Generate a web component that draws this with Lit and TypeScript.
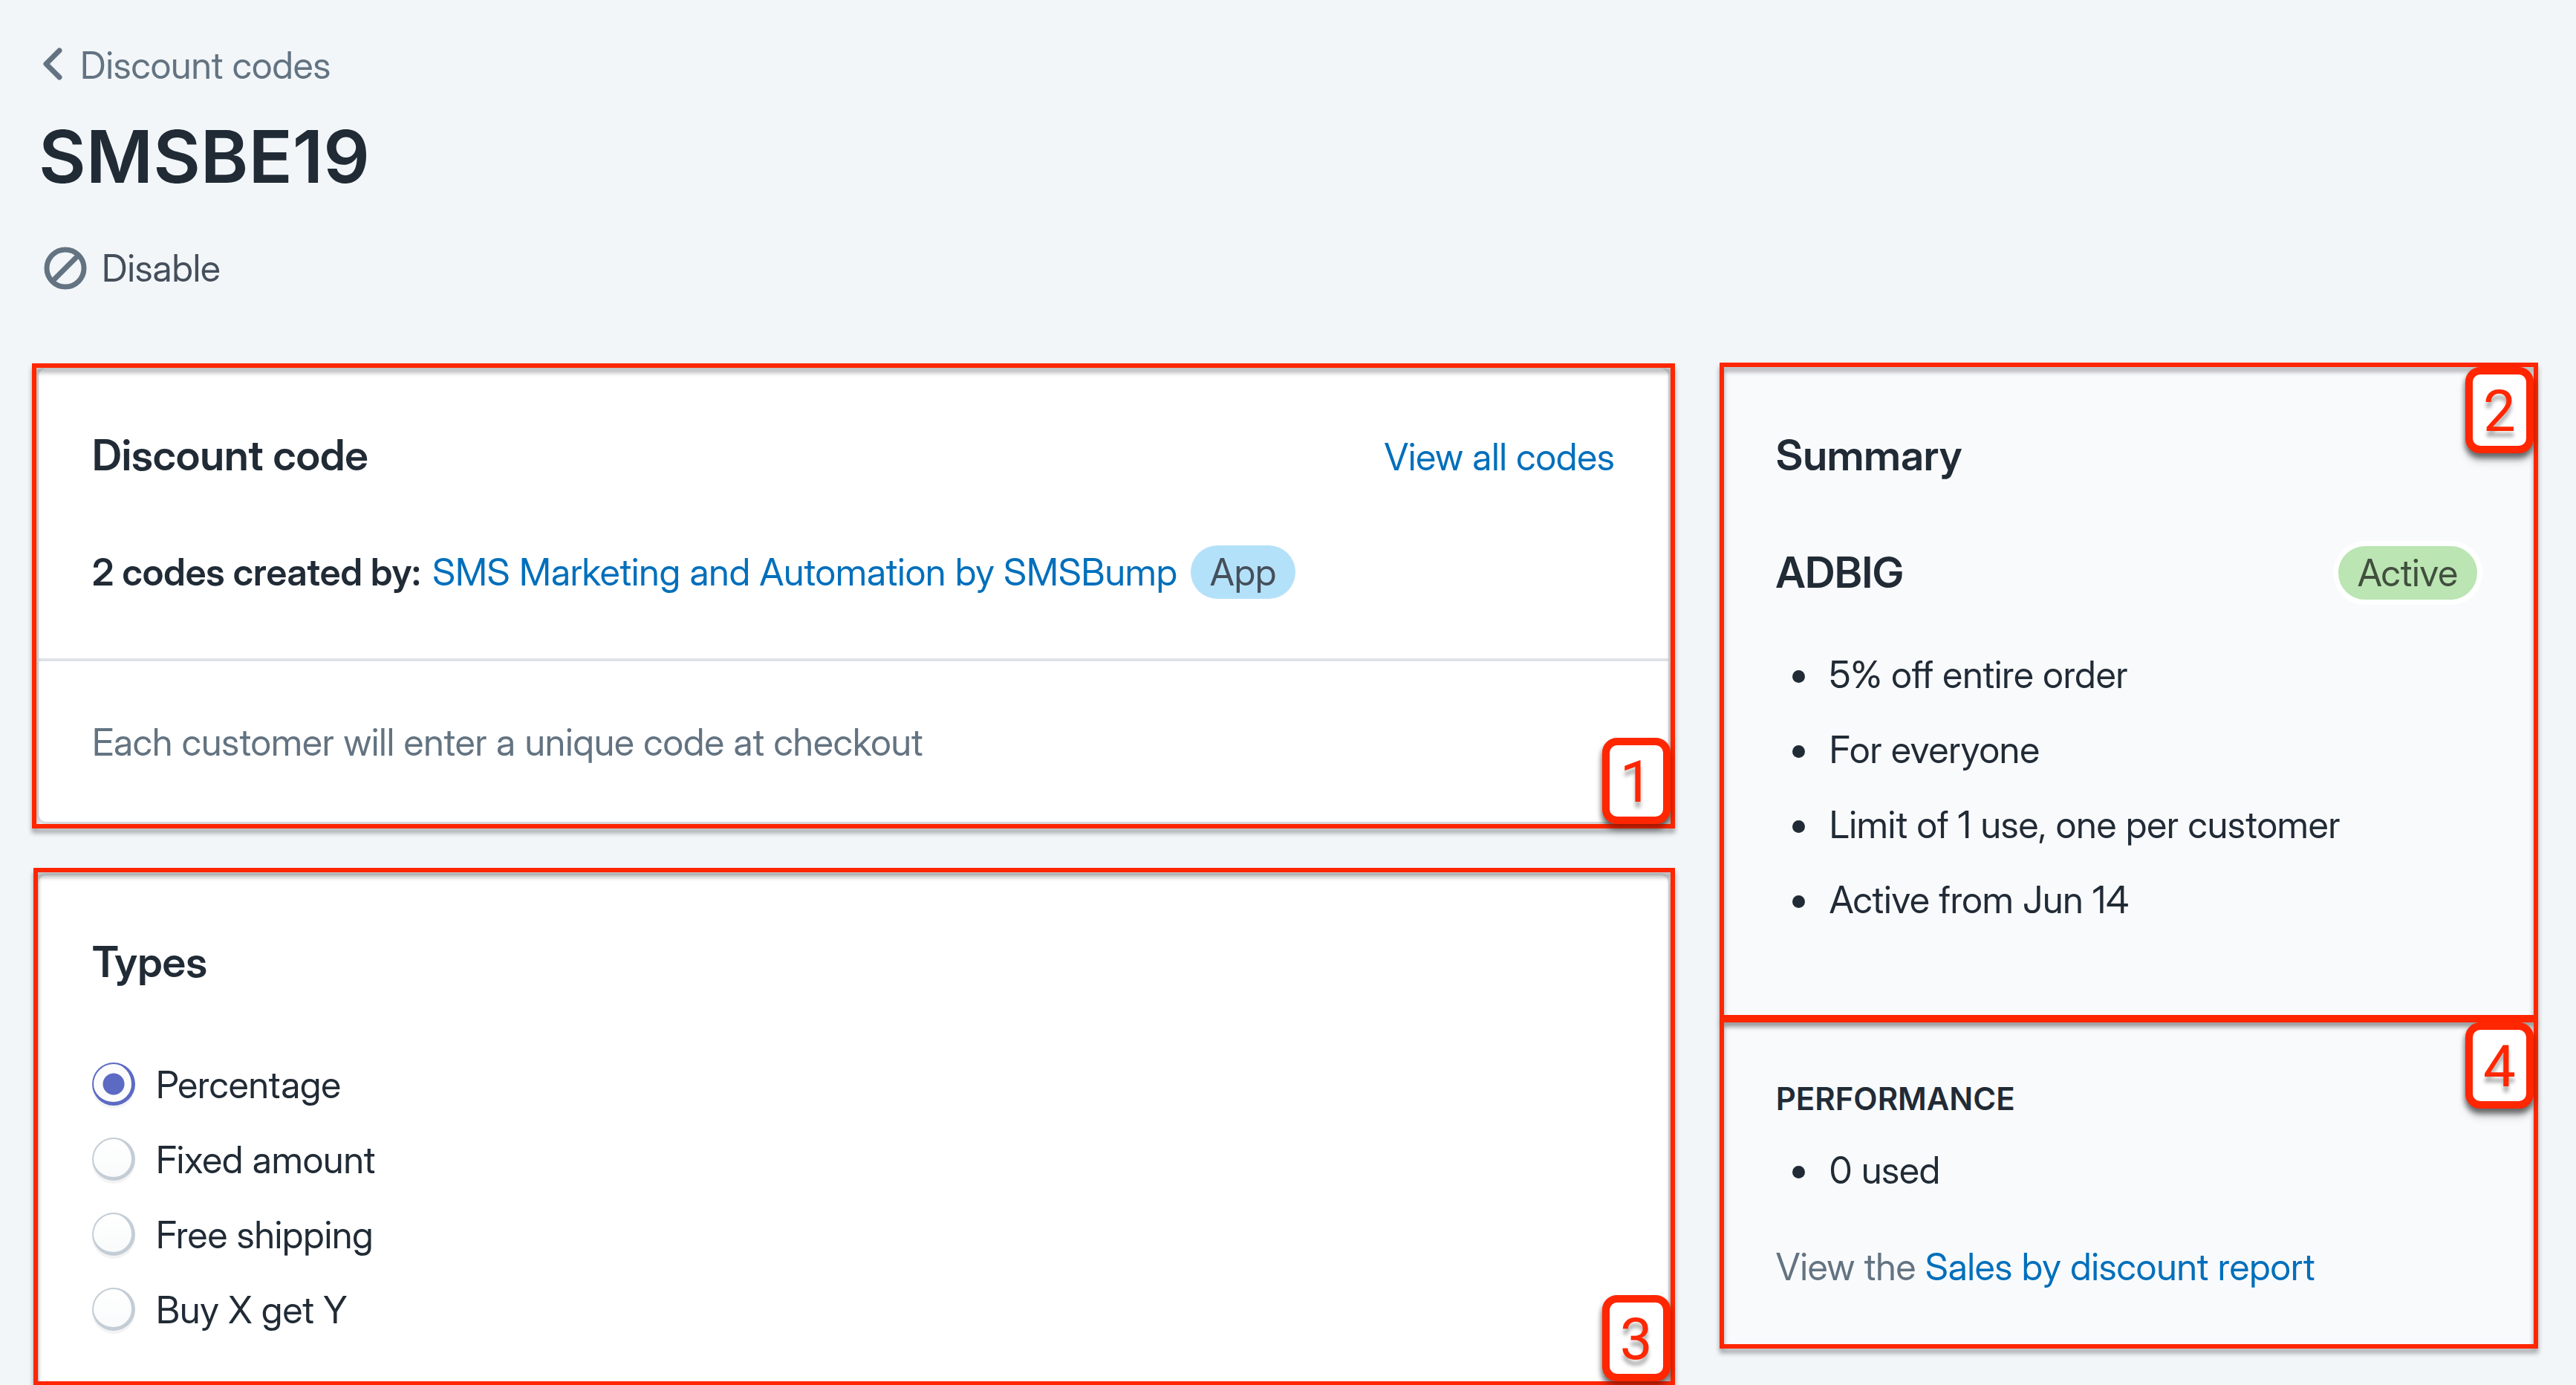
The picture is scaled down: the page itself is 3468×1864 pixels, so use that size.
import { LitElement, html, css, svg } from "lit";
import { customElement, property, state } from "lit/decorators.js";

const chevronIcon = svg`<path d="M22 4 L4 22 L22 40" fill="none" stroke="#637381" stroke-width="7" stroke-linecap="round" stroke-linejoin="round"/>`;
const disableIcon = svg`<g fill="none" stroke="#637381" stroke-width="7"><circle cx="29" cy="29" r="25"/><path d="M12 46 L46 12"/></g>`;

/** Red outline with a numbered badge, laid over the block that contains it. */
@customElement("callout-frame")
export class CalloutFrame extends LitElement {
  @property({ type: Number }) number = 0;
  @property({ reflect: true }) corner: "top" | "bottom" = "bottom";

  static styles = css`
    :host {
      position: absolute;
      display: flex;
      justify-content: flex-end;
      align-items: flex-end;
      box-sizing: border-box;
      border: 6px solid #ff2600;
      filter: drop-shadow(0 6px 3px rgba(0, 0, 0, 0.35));
      pointer-events: none;
      z-index: 1;
    }
    :host([corner="top"]) {
      align-items: flex-start;
    }
    .badge {
      box-sizing: border-box;
      width: 92px;
      height: 116px;
      border: 10px solid #ff2600;
      border-radius: 20px;
      background: #fff;
      box-shadow: 0 6px 8px rgba(0, 0, 0, 0.4);
      color: #ff2600;
      font: 400 78px/100px Roboto, "Liberation Sans", sans-serif;
      text-align: center;
      text-shadow: 0 8px 5px rgba(0, 0, 0, 0.3);
    }
  `;

  render() {
    return html`<span class="badge">${this.number}</span>`;
  }
}

@customElement("app-root")
export class AppRoot extends LitElement {
  @state() private selected = "Percentage";

  private types = ["Percentage", "Fixed amount", "Free shipping", "Buy X get Y"];
  private details = [
    "5% off entire order",
    "For everyone",
    "Limit of 1 use, one per customer",
    "Active from Jun 14",
  ];

  static styles = css`
    :host {
      display: block;
      box-sizing: border-box;
      min-height: 100vh;
      padding: 52px 54px 0 52px;
      overflow: hidden;
      background: #f2f6f9;
      color: #212b36;
      font: 400 50px/72px "Inter Display", Inter, sans-serif;
    }
    h1, h2, h3, p, ul, fieldset {
      margin: 0;
      padding: 0;
      border: 0;
    }
    a {
      color: #006fbb;
      text-decoration: none;
    }
    svg {
      display: block;
      flex: none;
    }
    .crumb {
      display: inline-flex;
      align-items: center;
      gap: 22px;
      padding-left: 6px;
      color: #637381;
      vertical-align: top;
    }
    .crumb svg {
      margin-bottom: 4px;
    }
    h1 {
      margin-top: 37px;
      font-family: Inter, sans-serif;
      font-size: 98px;
      font-weight: 600;
      line-height: 100px;
    }
    .disable {
      display: flex;
      align-items: center;
      gap: 20px;
      margin: 64px 0 0;
      padding: 0 0 0 7px;
      border: 0;
      background: none;
      color: #454f5b;
      font: inherit;
    }
    .layout {
      display: grid;
      grid-template-columns: 667fr 333fr;
      align-items: start;
      gap: 73px;
      margin-top: 99px;
    }
    .main {
      display: grid;
      gap: 72px;
    }
    .card {
      position: relative;
      border-radius: 10px;
      background: #fff;
      box-shadow: 0 0 0 3px rgba(63, 63, 68, 0.06), 0 3px 9px rgba(63, 63, 68, 0.15);
    }
    .side {
      background: #f9fafc;
      border-radius: 0;
      box-shadow: none;
    }
    .section {
      padding: 73px 72px 71px;
    }
    .side .section {
      position: relative;
    }
    .section + .section {
      border-top: 4px solid #dfe3e8;
    }
    h2 {
      font-size: 57px;
      font-weight: 600;
      line-height: 88px;
    }
    .row {
      display: flex;
      align-items: baseline;
      justify-content: space-between;
    }
    .creator {
      display: flex;
      align-items: center;
      margin-top: 77px;
      padding-bottom: 9px;
    }
    .creator strong {
      font-weight: 600;
    }
    .creator a {
      margin: 0 18px 0 16px;
    }
    .pill {
      padding: 0 26px;
      border-radius: 36px;
      background: #b4e1fa;
      color: #454f5b;
    }
    .pill.active {
      margin: -7px;
      border: 7px solid #fff;
      border-radius: 43px;
      background: #bbe5b3;
      color: #414f3e;
    }
    .muted {
      color: #637381;
    }
    fieldset {
      display: grid;
      gap: 29px;
      margin-top: 85px;
    }
    .types {
      padding-bottom: 65px;
    }
    .choice {
      display: flex;
      align-items: center;
      gap: 28px;
    }
    .choice input {
      appearance: none;
      box-sizing: border-box;
      width: 58px;
      height: 58px;
      margin: 0 0 2px;
      border: solid #c4cdd5;
      border-width: 2px 5px 5px 2px;
      border-radius: 50%;
      background: linear-gradient(#fff, #f9fafb);
      box-shadow: 0 4px 0 rgba(22, 29, 37, 0.05);
    }
    .choice input:checked {
      border-color: #5c6ac4;
      background: radial-gradient(circle at 27px 27px, #5c6ac4 14px, #fcfcfd 15px);
    }
    .code {
      display: flex;
      align-items: center;
      justify-content: space-between;
      margin-top: 70px;
      padding-right: 7px;
    }
    ul {
      margin-top: 57px;
      padding-left: 72px;
      list-style: none;
    }
    li + li {
      margin-top: 29px;
    }
    li::before {
      content: "";
      display: inline-block;
      width: 17px;
      height: 17px;
      margin: 0 33px 0 -50px;
      border-radius: 50%;
      background: #212b36;
      vertical-align: 7px;
    }
    .summary {
      padding-bottom: 123px;
    }
    h3 {
      padding-top: 4px;
      font-family: Inter, sans-serif;
      font-size: 42px;
      font-weight: 600;
      line-height: 56px;
      text-transform: uppercase;
    }
    h3 + ul {
      margin-top: 32px;
    }
    .report {
      margin-top: 58px;
    }
    .frame-code {
      inset: -7px -9px -9px -9px;
    }
    .frame-types {
      inset: -10px -9px -1px -7px;
    }
    .frame-summary {
      inset: -8px -3px -2px -4px;
    }
    .frame-performance {
      inset: -4px -3px -3px -4px;
    }
  `;

  render() {
    return html`
      <header>
        <a class="crumb" href="#codes">
          <svg width="28" height="44" viewBox="0 0 28 44" aria-hidden="true">${chevronIcon}</svg>
          Discount codes
        </a>
        <h1>SMSBE19</h1>
        <button class="disable" type="button">
          <svg width="58" height="58" viewBox="0 0 58 58" aria-hidden="true">${disableIcon}</svg>
          Disable
        </button>
      </header>
      <main class="layout">
        <div class="main">
          <section class="card">
            <div class="section">
              <div class="row">
                <h2>Discount code</h2>
                <a href="#all">View all codes</a>
              </div>
              <div class="creator">
                <strong>2 codes created by:</strong>
                <a href="#app">SMS Marketing and Automation by SMSBump</a>
                <span class="pill">App</span>
              </div>
            </div>
            <div class="section">
              <p class="muted">Each customer will enter a unique code at checkout</p>
            </div>
            <callout-frame class="frame-code" number="1" corner="bottom"></callout-frame>
          </section>
          <section class="card">
            <div class="section types">
              <h2 id="types">Types</h2>
              <fieldset aria-labelledby="types">
                ${this.types.map(
                  (type) => html`
                    <label class="choice">
                      <input
                        type="radio"
                        name="type"
                        .checked=${this.selected === type}
                        @change=${() => (this.selected = type)}
                      />
                      ${type}
                    </label>
                  `,
                )}
              </fieldset>
            </div>
            <callout-frame class="frame-types" number="3" corner="bottom"></callout-frame>
          </section>
        </div>
        <aside class="card side">
          <div class="section summary">
            <h2>Summary</h2>
            <div class="code">
              <h2>ADBIG</h2>
              <span class="pill active">Active</span>
            </div>
            <ul>
              ${this.details.map((detail) => html`<li>${detail}</li>`)}
            </ul>
            <callout-frame class="frame-summary" number="2" corner="top"></callout-frame>
          </div>
          <div class="section">
            <h3>Performance</h3>
            <ul>
              <li>0 used</li>
            </ul>
            <p class="report muted">View the <a href="#report">Sales by discount report</a></p>
            <callout-frame class="frame-performance" number="4" corner="top"></callout-frame>
          </div>
        </aside>
      </main>
    `;
  }
}
